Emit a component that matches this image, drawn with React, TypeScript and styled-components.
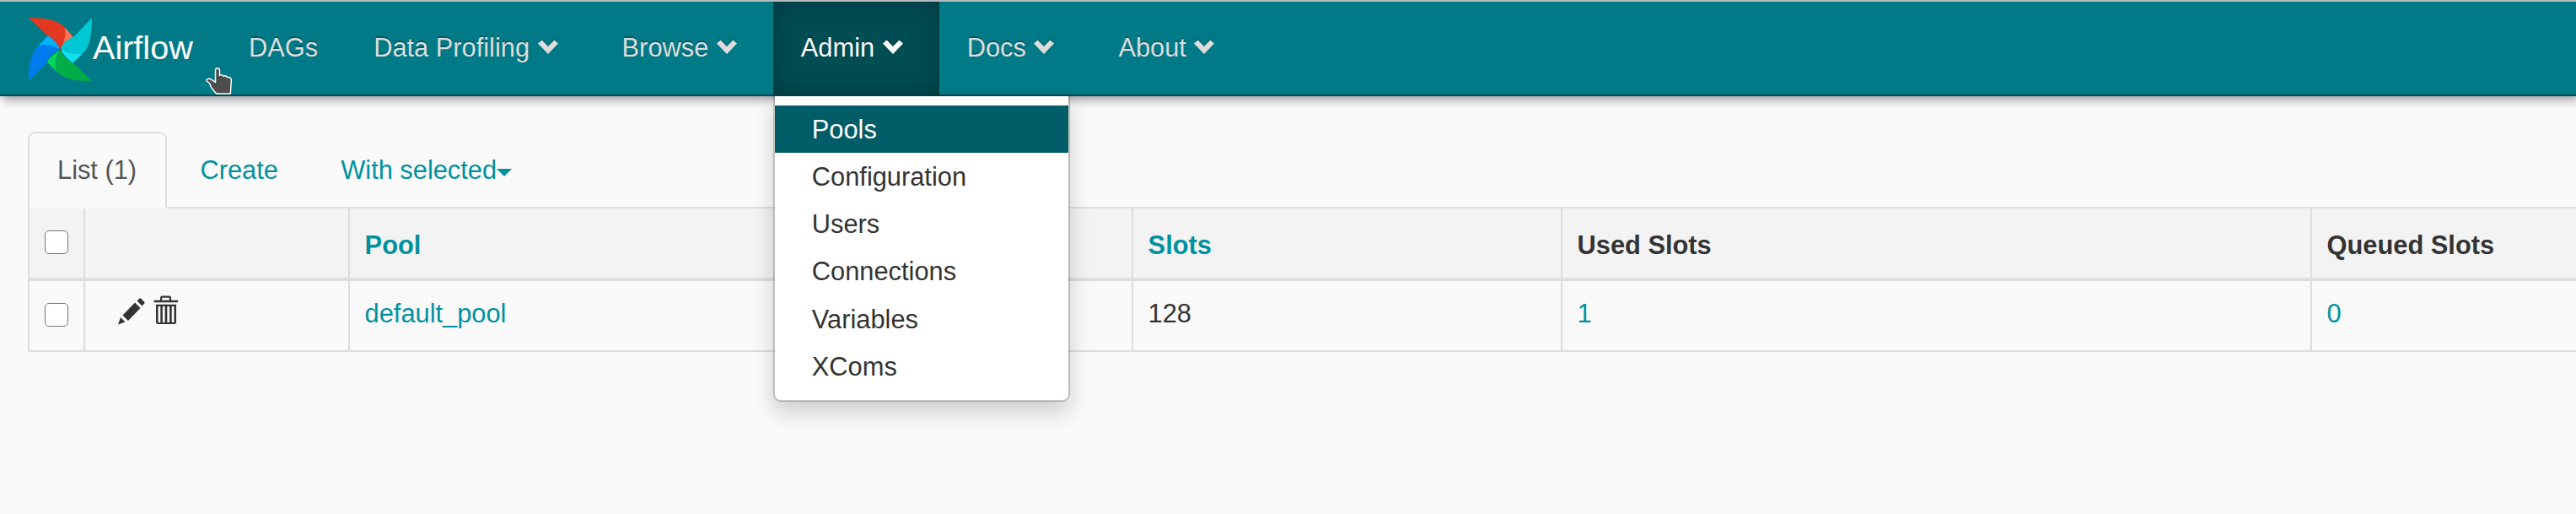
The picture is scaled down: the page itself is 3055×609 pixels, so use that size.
import React from 'react';
import styled, { createGlobalStyle, css } from 'styled-components';

const GlobalStyle = createGlobalStyle`
  *, *::before, *::after { box-sizing: border-box; }
  html, body { height: 100%; }
  body {
    margin: 0;
    overflow: hidden;
    background: #fafafa;
    color: #333;
    font-family: 'Liberation Sans', Arial, Helvetica, sans-serif;
    font-size: 30.8px;
    line-height: 44px;
  }
  a { color: inherit; text-decoration: none; }
`;

const Navbar = styled.nav`
  position: relative;
  z-index: 10;
  display: flex;
  height: 114px;
  padding-left: 33px;
  background: #007a87;
  border-top: 2px solid #b5bbbf;
  border-bottom: 2px solid #004b53;
  box-shadow: 3px 4px 11px rgba(0, 0, 0, 0.4);
`;

const Brand = styled.a`
  display: flex;
  width: 229px;
  padding-top: 18px;
  color: #fff;
  font-size: 39.6px;
  white-space: nowrap;
`;

const BrandName = styled.span`
  padding-top: 14px;
`;

const NavItem = styled.div`
  position: relative;
  display: flex;
`;

const NavLink = styled.a<{ $active?: boolean }>`
  display: flex;
  height: 110px;
  padding: 33px 33px 0;
  color: #ddd;
  white-space: pre;
  text-shadow: 0 -2px 0 rgba(0, 0, 0, 0.25);
  ${({ $active }) =>
    $active &&
    css`
      color: #fff;
      background: #004d54;
      box-shadow: inset 0 0 33px rgba(0, 0, 0, 0.25);
    `}
`;

const ChevronIcon = styled.svg`
  width: 26px;
  height: 18px;
  margin: 12px 9px 0 0;
  fill: currentColor;
  overflow: visible;
  filter: drop-shadow(0 -2px 0 rgba(0, 0, 0, 0.2));
`;

const Menu = styled.div`
  position: absolute;
  top: 110px;
  left: 0;
  width: 352px;
  padding: 11px 0;
  background: #fff;
  background-clip: padding-box;
  border: 2px solid rgba(0, 0, 0, 0.2);
  border-top-color: rgba(0, 0, 0, 0.15);
  border-radius: 0 0 9px 9px;
  box-shadow: 0 13px 26px rgba(0, 0, 0, 0.175);
`;

const MenuItem = styled.a<{ $active?: boolean }>`
  display: block;
  height: 56.25px;
  padding: 6.6px 44px 0;
  color: ${({ $active }) => ($active ? '#fff' : '#333')};
  background: ${({ $active }) => ($active ? '#005c66' : 'transparent')};
`;

const Content = styled.main`
  padding: 42px 0 0 33px;
`;

const Tabs = styled.div`
  display: flex;
  gap: 4.4px;
  height: 91px;
  border-bottom: 2px solid #ddd;
`;

const Tab = styled.a<{ $active?: boolean }>`
  display: flex;
  height: 91px;
  padding: 22px 33px;
  border: 2px solid transparent;
  color: #0091a1;
  white-space: nowrap;
  ${({ $active }) =>
    $active &&
    css`
      width: 165px;
      color: #555;
      background: #fafafa;
      border-color: #ddd #ddd #fafafa;
      border-radius: 9px 9px 0 0;
    `}
`;

const Caret = styled.span`
  width: 0;
  height: 0;
  margin-top: 20px;
  border: 9px solid transparent;
  border-top-color: currentColor;
  border-bottom: 0;
`;

const Row = styled.div<{ $head?: boolean }>`
  display: grid;
  grid-template-columns: 66px 314px 929px 509px 889px 1fr;
  height: ${({ $head }) => ($head ? '86px' : '84px')};
  background: ${({ $head }) => ($head ? '#f3f3f3' : '#f9f9f9')};
  border-bottom: ${({ $head }) => ($head ? '4px' : '2px')} solid #ddd;
  font-weight: ${({ $head }) => ($head ? 700 : 400)};
`;

const Cell = styled.div<{ $head?: boolean; $link?: boolean }>`
  display: flex;
  padding: ${({ $head }) => ($head ? '22px' : '17px')} 17.6px 0;
  border-left: 2px solid #ddd;
  color: ${({ $link }) => ($link ? '#0091a1' : '#333')};
`;

const Checkbox = styled.input<{ $head?: boolean }>`
  appearance: none;
  width: 28px;
  height: 28px;
  margin: ${({ $head }) => ($head ? '4px' : '9px')} 0 0;
  background: #fff;
  border: 1px solid #767676;
  border-radius: 5px;
`;

const Actions = styled.div`
  display: flex;
  gap: 10px;
  padding-left: 21.4px;
`;

const ActionIcon = styled.svg`
  width: 32px;
  height: 36px;
  fill: #333;
`;

const HandCursor = styled.svg`
  position: absolute;
  left: 243px;
  top: 77px;
  width: 34px;
  height: 35px;
  z-index: 20;
`;

const Chevron = () => (
  <ChevronIcon viewBox="0 0 26 18">
    <path d="M5.6 0.5 13 8 20.4 0.5 25 4.6 13 17 1 4.6Z" />
  </ChevronIcon>
);

const Logo = () => (
  <svg width="77" height="77" viewBox="0 0 77 77">
    <path fill="#e43921" d="M1 1C22 1 36 4 43.500 12c4 8 2 17-5 26.500C35 32 30 25 23.500 22.500Z" />
    <path fill="#ff7557" d="M43.500 12 54 24C46 27 41 31 38.500 38.500 44 29 46 19 43.500 12Z" />
    <path fill="#00c7d4" d="M76 1C76 22 73 37 65 43.500c-8 2-17 0-26.500-5C41 31 48 26 54 24Z" />
    <path fill="#11e1ee" d="M65 43.500 53.500 54.500C49 52 44 47 38.500 38.500 47 43 56 45 65 43.500Z" />
    <path fill="#00ad46" d="M76 76C54 76 42 73 34.500 65c-3-8-1-17 4-26.500C42 47 47 52 53.500 54.500Z" />
    <path fill="#04d659" d="M34.500 65 22.500 53.500C26 47 34 43 38.500 38.500 33 47 31 56 34.500 65Z" />
    <path fill="#017cee" d="M1 76C1 54 5 42 12.500 34c9-2 17-1 26 4.500C30 42 26 46 22.500 53.500Z" />
    <path fill="#00b1fc" d="M12.500 34 23.500 22.500C30 25 34 31 38.500 38.500 30 33.500 21 31.500 12.500 34Z" />
    <circle cx="38.500" cy="38.500" r="1.500" fill="#51504f" />
  </svg>
);

const navItems = ['DAGs', 'Data Profiling', 'Browse', 'Admin', 'Docs', 'About'];
const adminItems = ['Pools', 'Configuration', 'Users', 'Connections', 'Variables', 'XComs'];

export default function App() {
  return (
    <>
      <GlobalStyle />
      <Navbar>
        <Brand href="#">
          <Logo />
          <BrandName>Airflow</BrandName>
        </Brand>
        {navItems.map((name) => (
          <NavItem key={name}>
            <NavLink href="#" $active={name === 'Admin'}>
              {name === 'DAGs' ? name : `${name} `}
              {name !== 'DAGs' && <Chevron />}
            </NavLink>
            {name === 'Admin' && (
              <Menu>
                {adminItems.map((item) => (
                  <MenuItem href="#" key={item} $active={item === 'Pools'}>
                    {item}
                  </MenuItem>
                ))}
              </Menu>
            )}
          </NavItem>
        ))}
      </Navbar>
      <HandCursor viewBox="0 0 34 35">
        <path
          d="M12.500 6.500C12.500 2.700 17.300 2.700 17.500 6.500V12.500C19 11.300 21.500 11.800 22 13.300 24 12.300 26 13 26.500 14.600 29 14.200 31.500 15.500 31.300 18L30.300 34H13.500L7.500 26.500 5.500 21.500 2.200 19C1 17 4.500 15.500 7 16.800L12.500 20.500Z"
          fill="#4d4d4d"
          stroke="#fff"
          strokeWidth="1.500"
          strokeLinejoin="round"
        />
      </HandCursor>
      <Content>
        <Tabs>
          <Tab href="#" $active>List (1)</Tab>
          <Tab href="#">Create</Tab>
          <Tab href="#">With selected<Caret /></Tab>
        </Tabs>
        <Row $head>
          <Cell $head><Checkbox type="checkbox" $head /></Cell>
          <Cell $head />
          <Cell $head $link>Pool</Cell>
          <Cell $head $link>Slots</Cell>
          <Cell $head>Used Slots</Cell>
          <Cell $head>Queued Slots</Cell>
        </Row>
        <Row>
          <Cell><Checkbox type="checkbox" /></Cell>
          <Cell>
            <Actions>
              <ActionIcon viewBox="0 0 32 36">
                <path d="M0 34.500 3 26 8.500 31.500ZM5.500 23.500 20 8.500 26.500 15 12 30ZM22.500 6.500 25.500 3.500Q26.500 3 27.500 4L31 7.500Q32 8.500 31.300 9.500L28.500 12.500Z" />
              </ActionIcon>
              <ActionIcon viewBox="0 0 32 36">
                <path
                  fillRule="evenodd"
                  d="M0.500 5.700H8V3Q8 0.500 10.500 0.500H18.500Q21 0.500 21 3V5.700H29V8.200H0.500ZM10.200 5.700H18.800V2.700H10.200ZM3 10.700H27V31.500Q27 34 24.500 34H5.500Q3 34 3 31.500ZM5.500 13V32H8.300V13ZM10.800 13V32H13.600V13ZM16.300 13V32H19.100V13ZM21.700 13V32H24.500V13Z"
                />
              </ActionIcon>
            </Actions>
          </Cell>
          <Cell $link>default_pool</Cell>
          <Cell>128</Cell>
          <Cell $link>1</Cell>
          <Cell $link>0</Cell>
        </Row>
      </Content>
    </>
  );
}
